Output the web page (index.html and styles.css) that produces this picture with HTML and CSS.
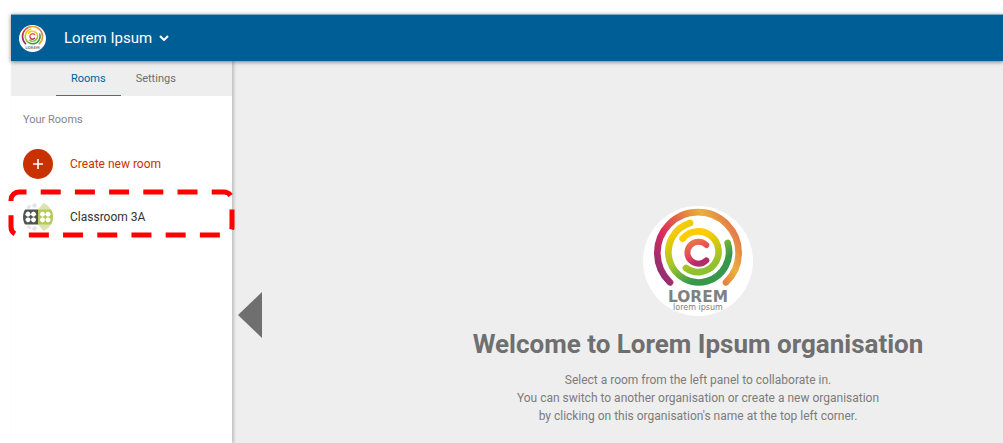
FILE: index.html
```html
<!DOCTYPE html>
<html lang="en">
<head>
    <meta charset="utf-8">
    <title>Lorem Ipsum - Rooms</title>
    <link rel="stylesheet" href="styles.css">
</head>
<body>
    <!-- Logo rings, shared by the header and the welcome area -->
    <svg class="sprite" aria-hidden="true">
        <defs>
            <linearGradient id="ring-outer" x1="0" y1="0.8" x2="1" y2="0.3">
                <stop offset="0" stop-color="#8f2f72"/>
                <stop offset="0.25" stop-color="#dc2a5c"/>
                <stop offset="0.6" stop-color="#e8883f"/>
                <stop offset="0.75" stop-color="#eab03c"/>
                <stop offset="1" stop-color="#e4774a"/>
            </linearGradient>
            <linearGradient id="ring-middle" x1="0" y1="0" x2="0.7" y2="1">
                <stop offset="0.1" stop-color="#ffcc00"/>
                <stop offset="0.5" stop-color="#a6c62c"/>
                <stop offset="0.85" stop-color="#35984a"/>
                <stop offset="1" stop-color="#35984a"/>
            </linearGradient>
            <linearGradient id="ring-inner" x1="0" y1="0" x2="0.3" y2="1">
                <stop offset="0.2" stop-color="#ffcc00"/>
                <stop offset="1" stop-color="#8fc030"/>
            </linearGradient>
            <linearGradient id="ring-core" x1="0" y1="0" x2="0.4" y2="1">
                <stop offset="0" stop-color="#ea7a45"/>
                <stop offset="0.6" stop-color="#e6475a"/>
                <stop offset="1" stop-color="#b52a68"/>
            </linearGradient>
        </defs>
        <symbol id="rings" viewBox="0 0 330 330">
            <circle cx="165" cy="165" r="165" fill="#fff"/>
            <g fill="none" stroke-width="20" stroke-linecap="round">
                <path stroke="url(#ring-outer)" d="M81 229A122 122 0 1 1 249 229"/>
                <path stroke="url(#ring-middle)" d="M141 51A91 91 0 1 0 254 111"/>
                <path stroke="url(#ring-inner)" d="M119 98A61 61 0 1 1 129 186"/>
                <path stroke="url(#ring-core)" stroke-width="18" d="M190 117A33 33 0 1 0 190 163"/>
            </g>
        </symbol>
    </svg>

    <header class="topbar">
        <svg class="topbar-logo" viewBox="0 0 330 330" aria-hidden="true">
            <use href="#rings"/>
            <text class="logo-name" x="165" y="288">LOREM</text>
        </svg>
        <button type="button" class="org-switch">
            Lorem Ipsum
            <svg width="10" height="6" viewBox="0 0 10 6" aria-hidden="true">
                <path d="M1 1l4 4 4-4" fill="none" stroke="#fff" stroke-width="2"/>
            </svg>
        </button>
    </header>

    <div class="layout">
        <aside class="sidebar">
            <nav class="tabs">
                <a href="#rooms" class="tab active">Rooms</a>
                <a href="#settings" class="tab">Settings</a>
            </nav>
            <h2 class="section-title">Your Rooms</h2>
            <button type="button" class="room create">
                <svg class="room-icon" viewBox="0 0 30 30" aria-hidden="true">
                    <circle cx="15" cy="15" r="15" fill="#c83200"/>
                    <path d="M15 10v10M10 15h10" stroke="#fff" stroke-width="1.6"/>
                </svg>
                Create new room
            </button>
            <a href="#classroom-3a" class="room">
                <svg class="room-icon" viewBox="0 0 30 30" aria-hidden="true">
                    <defs>
                        <clipPath id="round"><circle cx="15" cy="15" r="15"/></clipPath>
                        <path id="petal" d="M0-2.6Q2.2-2.2 2.6 0Q2.2 2.2 0 2.6Q-2.2 2.2-2.6 0Q-2.2-2.2 0-2.6"/>
                    </defs>
                    <g clip-path="url(#round)">
                        <g fill="#e4e4e4">
                            <circle cx="11.5" cy="3.5" r="2.2"/>
                            <circle cx="5.5" cy="4.5" r="2.2"/>
                            <circle cx="11.5" cy="26.5" r="2.2"/>
                            <circle cx="5.5" cy="25.5" r="2.2"/>
                        </g>
                        <path d="M0 7.5h15v15H0z" fill="#4f5352"/>
                        <path d="M15 7.5L21.5 0 30 7.5v15L21.5 30 15 22.5z" fill="#dbe4b0"/>
                        <path d="M15 7.5h15v15H15z" fill="#b7ca56"/>
                        <g fill="#fff">
                            <use href="#petal" x="5" y="12.2"/>
                            <use href="#petal" x="10.5" y="12.2"/>
                            <use href="#petal" x="5" y="17.8"/>
                            <use href="#petal" x="10.5" y="17.8"/>
                            <use href="#petal" x="19.5" y="12.2"/>
                            <use href="#petal" x="25" y="12.2"/>
                            <use href="#petal" x="19.5" y="17.8"/>
                            <use href="#petal" x="25" y="17.8"/>
                        </g>
                    </g>
                </svg>
                Classroom 3A
                <svg class="highlight" viewBox="0 0 227 49" aria-hidden="true">
                    <path d="M3 11A8 8 0 0 1 11 3H216A8 8 0 0 1 224 11V38A8 8 0 0 1 216 46H11A8 8 0 0 1 3 38Z"
                        fill="none" stroke="#f00" stroke-width="5" stroke-dasharray="20 14.2"/>
                </svg>
            </a>
        </aside>

        <main class="content">
            <button type="button" class="collapse" aria-label="Collapse panel">
                <svg width="24" height="46" viewBox="0 0 24 46" aria-hidden="true">
                    <path d="M24 0v46L0 23z" fill="#6f6f6f"/>
                </svg>
            </button>
            <section class="welcome">
                <svg class="welcome-logo" viewBox="0 0 330 330" aria-hidden="true">
                    <use href="#rings"/>
                    <text class="logo-name" x="165" y="288">LOREM</text>
                    <text class="logo-sub" x="165" y="313">lorem ipsum</text>
                </svg>
                <h1>Welcome to Lorem Ipsum organisation</h1>
                <p>
                    Select a room from the left panel to collaborate in.<br>
                    You can switch to another organisation or create a new organisation<br>
                    by clicking on this organisation's name at the top left corner.
                </p>
            </section>
        </main>
    </div>
</body>
</html>
```

FILE: styles.css
```css
* {
    box-sizing: border-box;
}

body {
    display: flex;
    flex-direction: column;
    min-height: 100vh;
    margin: 0;
    padding: 14px 0 0 11px;
    font-family: Roboto, sans-serif;
    font-size: 12px;
    background-color: #fff;
}

button {
    padding: 0;
    border: none;
    background: none;
    font: inherit;
    cursor: pointer;
}

a {
    color: inherit;
    text-decoration: none;
}

.sprite {
    position: absolute;
    width: 0;
    height: 0;
}

.logo-name,
.logo-sub {
    font-family: "DejaVu Sans", sans-serif;
    text-anchor: middle;
    fill: #808080;
}

.logo-name {
    font-size: 46px;
    font-weight: bold;
}

.logo-sub {
    font-size: 24px;
}

/* Header */
.topbar {
    display: flex;
    align-items: center;
    gap: 18px;
    height: 47px;
    padding-left: 8px;
    border-top: 1px solid #7fadc9;
    background-color: #005e97;
    box-shadow: 0 1px 4px rgba(0, 0, 0, 0.5);
    z-index: 2;
}

.topbar-logo {
    width: 27px;
    height: 27px;
}

.org-switch {
    display: flex;
    align-items: center;
    gap: 7px;
    color: #fff;
    font-size: 15px;
}

.layout {
    display: flex;
    flex: 1;
}

/* Left panel */
.sidebar {
    width: 221px;
    background-color: #fff;
    box-shadow: 2px 0 3px rgba(0, 0, 0, 0.2);
    z-index: 1;
}

.tabs {
    display: flex;
    height: 35px;
    padding-left: 45px;
    background-color: #eee;
}

.tab {
    padding: 0 15px;
    border-bottom: 1px solid transparent;
    color: #6f6f6f;
    font-size: 11px;
    line-height: 36px;
}

.tab.active {
    border-color: #2f77ab;
    color: #005e97;
}

.section-title {
    margin: 0;
    padding: 16px 12px;
    color: #858585;
    font-size: 11px;
    font-weight: 400;
    line-height: 16px;
}

.room {
    display: flex;
    position: relative;
    align-items: center;
    gap: 17px;
    width: 100%;
    height: 53px;
    padding: 0 12px;
    color: #333;
}

.room.create {
    height: 52px;
    margin-top: -6px;
    color: #c83200;
}

.room-icon {
    width: 30px;
    height: 30px;
}

.highlight {
    position: absolute;
    top: -1px;
    left: -3px;
    width: 227px;
    height: 49px;
}

/* Main area */
.content {
    display: flex;
    flex: 1;
    align-items: flex-start;
    background-color: #eee;
}

.collapse {
    margin: 231px 0 0 6px;
}

.collapse svg {
    display: block;
}

.welcome {
    flex: 1;
    padding: 145px 0 0 131px;
    color: #6f6f6f;
    text-align: center;
}

.welcome-logo {
    display: block;
    width: 110px;
    height: 110px;
    margin: 0 auto;
}

.welcome h1 {
    margin: 12px 0 11px;
    font-size: 26px;
    font-weight: 700;
    line-height: 32px;
}

.welcome p {
    margin: 0;
    color: #7c7c7c;
    line-height: 18px;
}
```
